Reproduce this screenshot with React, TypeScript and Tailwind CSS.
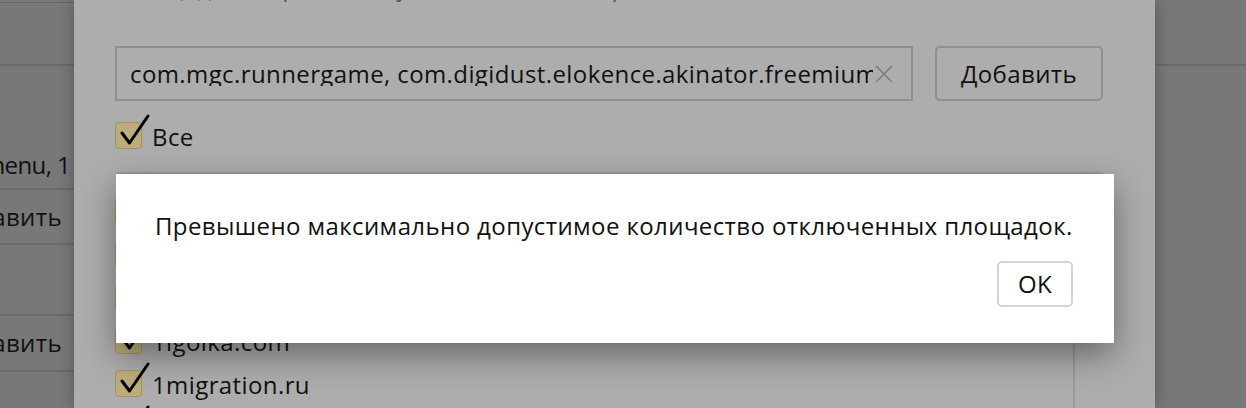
import React from "react";

const sites = ["1000bankov.ru", "1001eda.com", "100realty.ru", "1igolka.com", "1migration.ru", "1news.az"];

function Check({ checked = true }: { checked?: boolean }) {
  return (
    <span className="relative inline-block h-[27px] w-[27px] shrink-0 rounded-[4px] border border-[#a2935f] bg-[#bcad7b]">
      {checked && (
        <svg
          className="absolute left-0 top-[-9px] overflow-visible"
          width="36"
          height="36"
          viewBox="0 0 36 36"
          fill="none"
        >
          <path d="M6 19 L13.5 29 L32 2" stroke="#000" strokeWidth="3" strokeLinecap="round" strokeLinejoin="round" />
        </svg>
      )}
    </span>
  );
}

export default function App() {
  return (
    <div className="relative h-[408px] w-[1246px] overflow-hidden bg-[#787878] font-['Open_Sans',sans-serif] text-[24px] leading-none tracking-[0.4px] text-[#111]">
      {/* page behind everything, left strip */}
      <div className="flex w-[74px] flex-col overflow-hidden">
        <div className="h-[3px] border-b border-[#666]" />
        <div className="h-[63px] border-b-2 border-[#6a6a6a]" />
        <div className="flex h-[124px] items-end border-b-2 border-[#6a6a6a] pb-[11px]">
          <span className="ml-[-17px] shrink-0 whitespace-nowrap tracking-[-0.6px]">menu, 1</span>
        </div>
        <div className="flex h-[55px] items-center justify-end border-b-2 border-[#6a6a6a] pr-[12px]">
          <span className="shrink-0 whitespace-nowrap">Добавить</span>
        </div>
        <div className="h-[71px] border-b-2 border-[#6a6a6a]" />
        <div className="flex h-[56px] items-center justify-end border-b-2 border-[#6a6a6a] pr-[12px]">
          <span className="shrink-0 whitespace-nowrap">Добавить</span>
        </div>
      </div>
      <div className="absolute right-0 top-[64px] h-[2px] w-[91px] bg-[#6a6a6a]" />

      {/* dimmed dialog underneath */}
      <div className="absolute left-[74px] top-0 flex h-[408px] w-[1081px] flex-col bg-[#adadad] pl-[41px] pr-[52px] shadow-[0_0_14px_rgba(0,0,0,0.3)]">
        <div className="mt-[-25px] h-[20px] whitespace-nowrap text-[#555]">Площадки, через запятую или с новой строки</div>
        <div className="mt-[51px] flex gap-[22px]">
          <div className="flex h-[55px] w-[798px] items-center overflow-hidden border-2 border-[#8f8f8f] pl-[13px] pr-[18px]">
            <span className="flex-1 overflow-hidden whitespace-nowrap">
              com.mgc.runnergame, com.digidust.elokence.akinator.freemium
            </span>
            <svg width="18" height="18" viewBox="0 0 18 18" className="ml-[2px] shrink-0">
              <path d="M1 1 L17 17 M17 1 L1 17" stroke="#7d7d7d" strokeWidth="1.6" />
            </svg>
          </div>
          <button className="flex h-[55px] w-[168px] items-center justify-center rounded-[5px] border-2 border-[#909090] text-[#111]">
            Добавить
          </button>
        </div>
        <label className="mt-[21px] flex items-center gap-[10px]">
          <Check />
          <span className="mt-[2px]">Все</span>
        </label>
        <div className="mt-[23px] flex flex-1 border-t-2 border-[#9a9a9a]">
          <div className="flex flex-1 flex-col gap-[16px] pt-[24px]">
            {sites.map((s) => (
              <label key={s} className="flex items-center gap-[10px]">
                <Check />
                <span className="mt-[2px]">{s}</span>
              </label>
            ))}
          </div>
          <div className="w-[30px] border-l-2 border-[#999]" />
        </div>
      </div>

      {/* alert */}
      <div className="absolute left-[116px] top-[174px] flex h-[169px] w-[998px] flex-col bg-white pl-[39px] pr-[41px] shadow-[0_12px_32px_rgba(0,0,0,0.4)]">
        <p className="mt-[40px] whitespace-nowrap text-[#111]">
          Превышено максимально допустимое количество отключенных площадок.
        </p>
        <div className="mt-auto mb-[36px] flex justify-end">
          <button className="flex h-[46px] w-[76px] items-center justify-center rounded-[5px] border-2 border-[#d4d4d4] text-[#111]">
            OK
          </button>
        </div>
      </div>
    </div>
  );
}
